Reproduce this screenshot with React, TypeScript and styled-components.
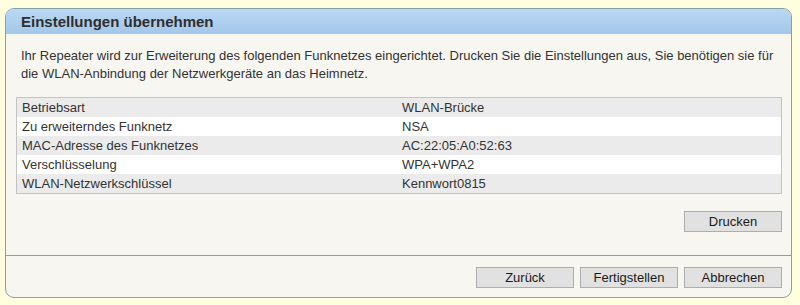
import React from "react";
import styled, { createGlobalStyle } from "styled-components";

const GlobalStyle = createGlobalStyle`
    html, body {
        margin: 0;
        padding: 0;
        background: #ffffdf;
    }
    body {
        font-family: "Liberation Sans", Arial, sans-serif;
        color: #333;
    }
`;

interface SettingRow {
    label: string;
    value: string;
}

const rows: SettingRow[] = [
    { label: "Betriebsart", value: "WLAN-Brücke" },
    { label: "Zu erweiterndes Funknetz", value: "NSA" },
    { label: "MAC-Adresse des Funknetzes", value: "AC:22:05:A0:52:63" },
    { label: "Verschlüsselung", value: "WPA+WPA2" },
    { label: "WLAN-Netzwerkschlüssel", value: "Kennwort0815" },
];

export default function App() {
    return (
        <>
            <GlobalStyle />
            <Page>
                <Panel>
                    <Header>Einstellungen übernehmen</Header>
                    <Content>
                        <Intro>
                            Ihr Repeater wird zur Erweiterung des folgenden Funknetzes eingerichtet. Drucken Sie die
                            Einstellungen aus, Sie benötigen sie für die WLAN-Anbindung der Netzwerkgeräte an das
                            Heimnetz.
                        </Intro>
                        <SettingsTable>
                            {rows.map((row, i) => (
                                <Row key={row.label} striped={i % 2 === 0}>
                                    <Cell>{row.label}</Cell>
                                    <Cell>{row.value}</Cell>
                                </Row>
                            ))}
                        </SettingsTable>
                        <ButtonRow>
                            <Button>Drucken</Button>
                        </ButtonRow>
                    </Content>
                    <Footer>
                        <Button>Zurück</Button>
                        <Button>Fertigstellen</Button>
                        <Button>Abbrechen</Button>
                    </Footer>
                </Panel>
            </Page>
        </>
    );
}

const Page = styled.div`
    width: 800px;
    height: 305px;
    box-sizing: border-box;
    padding: 8px 8px 7px 5px;
    display: flex;
`;

const Panel = styled.div`
    flex: 1;
    display: flex;
    flex-direction: column;
    background: #f7f6f1;
    border: 1px solid #84a2a4;
    border-radius: 9px;
    overflow: hidden;
`;

const Header = styled.div`
    height: 25px;
    flex-shrink: 0;
    box-sizing: border-box;
    padding: 4px 0 0 15px;
    background: linear-gradient(#b9d8f4, #a3c7e9);
    font-size: 15px;
    font-weight: bold;
    color: #2e2e2e;
`;

const Content = styled.div`
    flex: 1;
    display: flex;
    flex-direction: column;
    padding: 13px 9px 0 10px;
`;

const Intro = styled.p`
    margin: 0 0 14px 5px;
    font-size: 13px;
    line-height: 18px;
    color: #333;
`;

const SettingsTable = styled.div`
    border: 1px solid #c3c3c3;
    display: flex;
    flex-direction: column;
`;

const Row = styled.div<{ striped: boolean }>`
    height: 19px;
    display: grid;
    grid-template-columns: 380px 1fr;
    align-items: center;
    background: ${p => (p.striped ? "#ebebeb" : "#ffffff")};
`;

const Cell = styled.div`
    padding-left: 5px;
    font-size: 13px;
    color: #333;
    white-space: nowrap;
`;

const ButtonRow = styled.div`
    display: flex;
    justify-content: flex-end;
    margin-top: 17px;
`;

const Button = styled.button`
    width: 98px;
    height: 21px;
    box-sizing: border-box;
    padding: 0;
    background: #e1e1e1;
    border: 1px solid #adadad;
    border-radius: 0;
    font-family: "Liberation Sans", Arial, sans-serif;
    font-size: 13px;
    color: #1a1a1a;
`;

const Footer = styled.div`
    height: 42px;
    flex-shrink: 0;
    box-sizing: border-box;
    border-top: 1px solid #84a2a4;
    display: flex;
    justify-content: flex-end;
    align-items: flex-start;
    gap: 6px;
    padding: 11px 9px 0 0;
`;
